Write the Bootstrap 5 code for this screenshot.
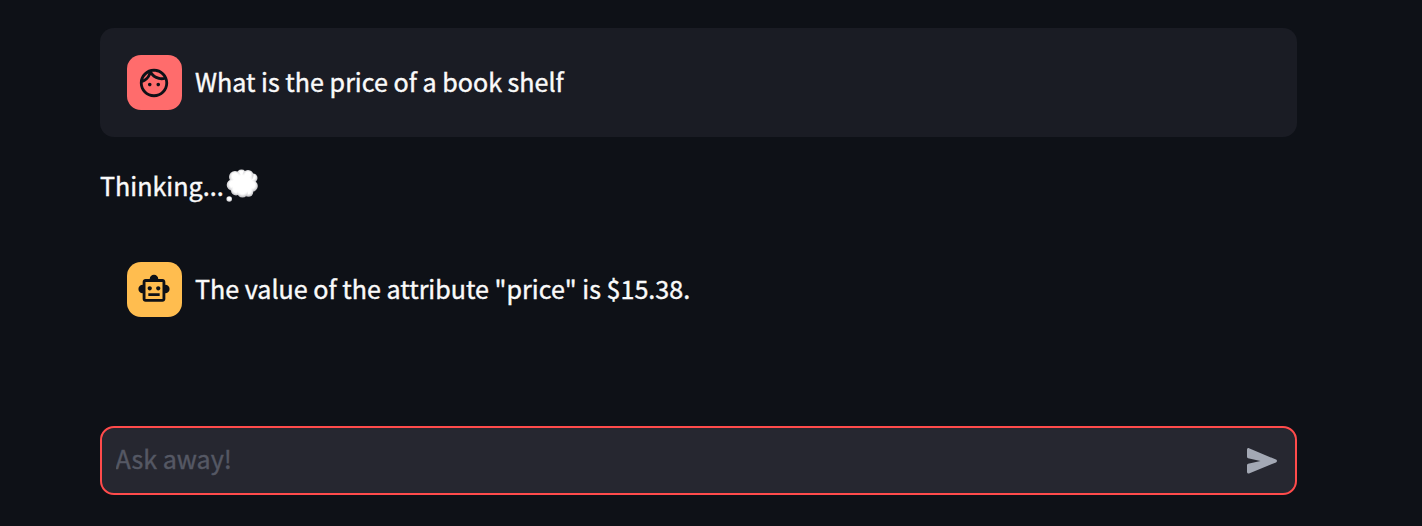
<!DOCTYPE html>
<html lang="en" data-bs-theme="dark">
<head>
<meta charset="utf-8">
<meta name="viewport" content="width=device-width, initial-scale=1">
<title>Chat</title>
<link href="https://cdn.jsdelivr.net/npm/bootstrap@5.3.0/dist/css/bootstrap.min.css" rel="stylesheet">
<style>
body{background:#0e1117;color:#fafafa;font-family:"Noto Sans CJK SC","Noto Sans",sans-serif;font-size:25.1px;line-height:44px;-webkit-text-stroke:.4px currentColor}
.chat{width:1197px;margin-left:100px;padding-top:28px}
.message{height:109px;padding:0 27px;gap:13px;border-radius:14px}
.message-user{background:#1a1c24}
.message-text,.status span{padding-bottom:4px}
.avatar{width:55px;height:55px;border-radius:14px;color:#0e1117;padding-right:1px}
.avatar svg{width:34px;height:34px}
.avatar-user{background:#ff6c6c}
.avatar-bot{background:#ffbd4f;padding-bottom:1px}
.status{height:44px;margin:28px 0 26px;gap:2px}
.status svg{margin-bottom:3px}
.ask{height:69px;margin-top:82px;border:2px solid #ff4b4b;border-radius:14px;background:#262730;padding:0 17px 0 13.5px}
.ask input,.ask input:focus{background:transparent;border:0;box-shadow:none;padding:0 0 6px;font-size:25.1px;height:50px;color:#fafafa}
.ask input::placeholder{color:#555864;opacity:1}
.send{color:#a3a8b4;line-height:0}
</style>
</head>
<body class="overflow-hidden">
<main class="chat d-flex flex-column">
  <div class="message message-user d-flex align-items-center">
    <div class="avatar avatar-user d-flex align-items-center justify-content-center flex-shrink-0">
      <svg viewBox="0 0 24 24" fill="currentColor" aria-hidden="true"><path d="M10.25 13c0 .69-.56 1.25-1.25 1.25S7.75 13.69 7.75 13s.56-1.25 1.25-1.25 1.25.56 1.25 1.25zM15 11.75c-.69 0-1.25.56-1.25 1.25s.56 1.25 1.25 1.25 1.25-.56 1.25-1.25-.56-1.25-1.25-1.25zm7 .25c0 5.52-4.48 10-10 10S2 17.52 2 12 6.48 2 12 2s10 4.48 10 10zM10.66 4.12C12.06 6.44 14.6 8 17.5 8c.46 0 .91-.05 1.34-.12C17.44 5.56 14.9 4 12 4c-.46 0-.91.05-1.34.12zM4.42 9.47c1.71-.97 3.03-2.55 3.66-4.44C6.37 6 5.05 7.58 4.42 9.47zM20 12c0-.78-.12-1.53-.33-2.24-.7.15-1.42.24-2.17.24-3.13 0-5.92-1.44-7.76-3.69C8.69 8.87 6.6 10.88 4 11.86c.01.04 0 .09 0 .14 0 4.41 3.59 8 8 8s8-3.59 8-8z"/></svg>
    </div>
    <div class="message-text">What is the price of a book shelf</div>
  </div>
  <div class="status d-flex align-items-center">
    <span>Thinking...</span>
    <svg width="34" height="36" viewBox="0 0 34 36" role="img" aria-label="thought balloon">
      <defs>
        <radialGradient id="puff" cx=".5" cy=".42" r=".6"><stop offset=".4" stop-color="#fff"/><stop offset="1" stop-color="#b8b8bc"/></radialGradient>
        <radialGradient id="core"><stop offset=".7" stop-color="#fff"/><stop offset="1" stop-color="#fff" stop-opacity="0"/></radialGradient>
      </defs>
      <g fill="url(#puff)">
        <circle cx="27" cy="10" r="4.500"/><circle cx="15.500" cy="6.500" r="5"/><circle cx="22" cy="7.500" r="5.500"/>
        <circle cx="9" cy="9" r="6"/><circle cx="6.500" cy="17" r="5.800"/><circle cx="26" cy="18" r="5.800"/>
        <circle cx="10" cy="22.500" r="5"/><circle cx="22.500" cy="24" r="4.800"/><circle cx="16.500" cy="24" r="5.500"/>
        <circle cx="3.200" cy="31" r="2.800"/>
      </g>
      <ellipse cx="16.500" cy="16" rx="14" ry="12" fill="url(#core)"/>
    </svg>
  </div>
  <div class="message d-flex align-items-center">
    <div class="avatar avatar-bot d-flex align-items-center justify-content-center flex-shrink-0">
      <svg viewBox="0 0 24 24" fill="currentColor" aria-hidden="true"><path d="M20 9V7c0-1.100-.9-2-2-2h-3c0-1.660-1.340-3-3-3S9 3.340 9 5H6c-1.100 0-2 .9-2 2v2c-1.660 0-3 1.340-3 3s1.340 3 3 3v4c0 1.100.9 2 2 2h12c1.100 0 2-.9 2-2v-4c1.660 0 3-1.340 3-3s-1.340-3-3-3zM18 19H6V7h12v12zM9 13c-.83 0-1.500-.67-1.500-1.500S8.170 10 9 10s1.500.67 1.500 1.500S9.830 13 9 13zm7.500-1.500c0 .83-.67 1.500-1.500 1.500s-1.500-.67-1.500-1.500.67-1.500 1.500-1.500 1.500.67 1.500 1.500zM8 15h8v2H8v-2z"/></svg>
    </div>
    <div class="message-text">The value of the attribute "price" is $15.38.</div>
  </div>
  <form class="ask d-flex align-items-center">
    <input class="form-control" type="text" placeholder="Ask away!" aria-label="Ask away!">
    <button class="send btn p-0 border-0" type="button" aria-label="Send">
      <svg width="32" height="28" viewBox="0 0 32 28" fill="currentColor"><path d="M1 2.600C1 1.500 2 .8 3 1.200L30 12.600c1.300.6 1.300 2.200 0 2.800L3 26.500c-1 .4-2-.3-2-1.400V18.200c0-.7.400-1.200 1.100-1.400L14.500 14 2.100 11.200C1.400 11 1 10.500 1 9.800z"/></svg>
    </button>
  </form>
</main>
<script src="https://cdn.jsdelivr.net/npm/bootstrap@5.3.0/dist/js/bootstrap.bundle.min.js"></script>
</body>
</html>
